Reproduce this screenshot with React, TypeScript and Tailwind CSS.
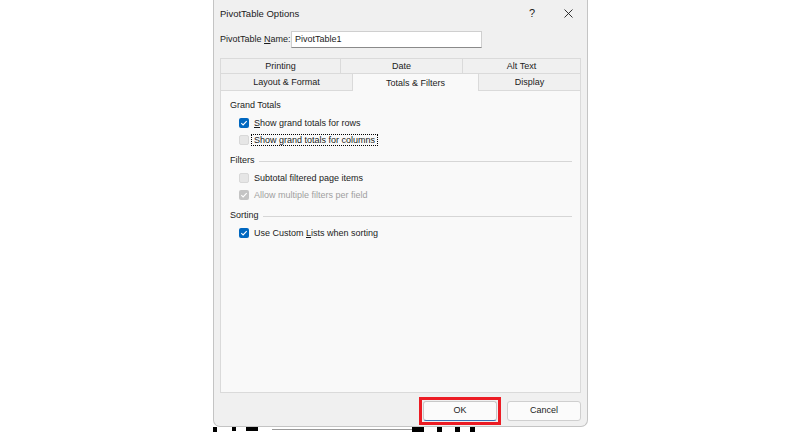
import React from "react";

const font = { fontFamily: '"Liberation Sans", Arial, sans-serif' };

function Check({ state }: { state: "on" | "off" | "disabled" }) {
  if (state === "off") {
    return <div className="w-[10px] h-[10px] rounded-[2px] bg-[#e6e6e6] border border-[#d8d8d8] shrink-0" />;
  }
  const bg = state === "on" ? "bg-[#0067c0]" : "bg-[#c4c4c4]";
  return (
    <div className={`w-[10px] h-[10px] rounded-[2px] ${bg} shrink-0 flex items-center justify-center`}>
      <svg width="8" height="8" viewBox="0 0 8 8">
        <path d="M1.3 4.2 L3.1 5.9 L6.7 2.2" fill="none" stroke="white" strokeWidth="1.1" />
      </svg>
    </div>
  );
}

function Row({ state, children, focus, disabled }: { state: "on" | "off" | "disabled"; children: React.ReactNode; focus?: boolean; disabled?: boolean }) {
  return (
    <div className="h-[17px] flex items-center pl-[9px]">
      <Check state={state} />
      <span
        className={`ml-[2px] px-[2px] leading-[10px] whitespace-nowrap ${focus ? "border border-dotted border-black" : "border border-transparent"} ${disabled ? "text-[#9f9f9f]" : "text-[#1b1b1b]"}`}
      >
        {children}
      </span>
    </div>
  );
}

function Header({ children, first }: { children: React.ReactNode; first?: boolean }) {
  return (
    <div className={`h-[12px] flex items-center ${first ? "" : "mt-[7px]"}`}>
      <span className="text-[#1b1b1b] whitespace-nowrap">{children}</span>
      <div className={`flex-1 h-px ml-[4px] ${first ? "bg-transparent" : "bg-[#d6d6d6]"}`} />
    </div>
  );
}

export default function App() {
  return (
    <div className="w-[800px] h-[432px] bg-white overflow-hidden text-[9px]" style={font}>
      <div className="ml-[213px] w-[375px] h-[427px] bg-[#f0f0f0] border border-t-0 border-[#c4c4c4] rounded-b-[7px] flex flex-col px-[6px]">
        {/* Title bar */}
        <div className="h-[27px] flex items-center shrink-0">
          <span className="text-[#1b1b1b] text-[9.5px] pt-[1px]">PivotTable Options</span>
          <div className="flex-1" />
          <span className="text-[#1b1b1b] text-[11px] mr-[29px]">?</span>
          <svg width="9" height="9" viewBox="0 0 9 9" className="mr-[8px]">
            <path d="M0.5 0.5 L8.5 8.5 M8.5 0.5 L0.5 8.5" stroke="#1b1b1b" strokeWidth="0.9" />
          </svg>
        </div>
        {/* Name row */}
        <div className="h-[17px] mt-[4px] flex items-center shrink-0">
          <span className="text-[#1b1b1b] w-[71px] whitespace-nowrap pt-[1px]">
            PivotTable <span className="underline">N</span>ame:
          </span>
          <div className="w-[191px] h-[17px] bg-white border border-[#cfcfcf] border-b-[#8a8a8a] flex items-center px-[3px] text-[#1b1b1b]">
            PivotTable1
          </div>
        </div>
        {/* Tabs */}
        <div className="mt-[10px] w-[361px] shrink-0">
          <div className="h-[16px] flex border border-[#dadada] bg-[#f0f0f0]">
            <div className="w-[120px] flex items-center justify-center border-r border-[#dadada] text-[#1b1b1b] pt-[2px]">Printing</div>
            <div className="w-[122px] flex items-center justify-center border-r border-[#dadada] text-[#1b1b1b] pt-[2px]">Date</div>
            <div className="flex-1 flex items-center justify-center text-[#1b1b1b] pt-[2px]">Alt Text</div>
          </div>
          <div className="h-[17px] flex">
            <div className="w-[132px] flex items-center justify-center border-l border-b border-[#dadada] text-[#1b1b1b] pt-[2px]">Layout &amp; Format</div>
            <div className="w-[127px] flex items-center justify-center bg-[#f9f9f9] border-l border-r border-[#dadada] text-[#1b1b1b] pt-[2px]">Totals &amp; Filters</div>
            <div className="flex-1 flex items-center justify-center border-r border-b border-[#dadada] text-[#1b1b1b] pt-[2px]">Display</div>
          </div>
        </div>
        {/* Panel */}
        <div className="w-[361px] flex-1 bg-[#f9f9f9] border border-t-0 border-[#dadada] pt-[9px] pl-[9px] pr-[8px] flex flex-col">
          <Header first>Grand Totals</Header>
          <div className="mt-[2px]" />
          <Row state="on">
            <span className="underline">S</span>how grand totals for rows
          </Row>
          <Row state="off" focus>
            Show grand totals for columns
          </Row>
          <Header>Filters</Header>
          <div className="mt-[2px]" />
          <Row state="off">Subtotal filtered page items</Row>
          <Row state="disabled" disabled>
            Allow multiple filters per field
          </Row>
          <Header>Sorting</Header>
          <div className="mt-[2px]" />
          <Row state="on">
            Use Custom <span className="underline">L</span>ists when sorting
          </Row>
        </div>
        {/* Buttons */}
        <div className="h-[20px] mt-[8px] mb-[5px] flex justify-end gap-[10px] w-[361px] shrink-0">
          <div className="relative w-[74px] h-[20px]">
            <div className="w-full h-full bg-[#fbfbfb] border border-[#c8c8c8] border-b-[#3a6fb0] rounded-[3px] flex items-center justify-center text-[#1b1b1b]">
              OK
            </div>
            <div className="absolute -inset-[4px] border-[3px] border-[#ec1c24]" />
          </div>
          <div className="w-[74px] h-[20px] bg-[#fbfbfb] border border-[#cfcfcf] rounded-[3px] flex items-center justify-center text-[#1b1b1b]">
            Cancel
          </div>
        </div>
      </div>
      {/* Background fragments below dialog */}
      <div className="h-[5px] flex items-start">
        <div className="ml-[213px] w-[4px] h-[5px] bg-black" />
        <div className="ml-[15px] w-[4px] h-[4px] bg-black" />
        <div className="ml-[10px] w-[12px] h-[4px] bg-black" />
        <div className="ml-[14px] w-[140px] h-px mt-[2px] bg-[#9a9a9a]" />
        <div className="w-[12px] h-[5px] bg-black" />
        <div className="ml-[13px] w-[5px] h-[5px] bg-black" />
        <div className="ml-[13px] w-[5px] h-[5px] bg-black" />
        <div className="ml-[10px] w-[5px] h-[5px] bg-black" />
      </div>
    </div>
  );
}
